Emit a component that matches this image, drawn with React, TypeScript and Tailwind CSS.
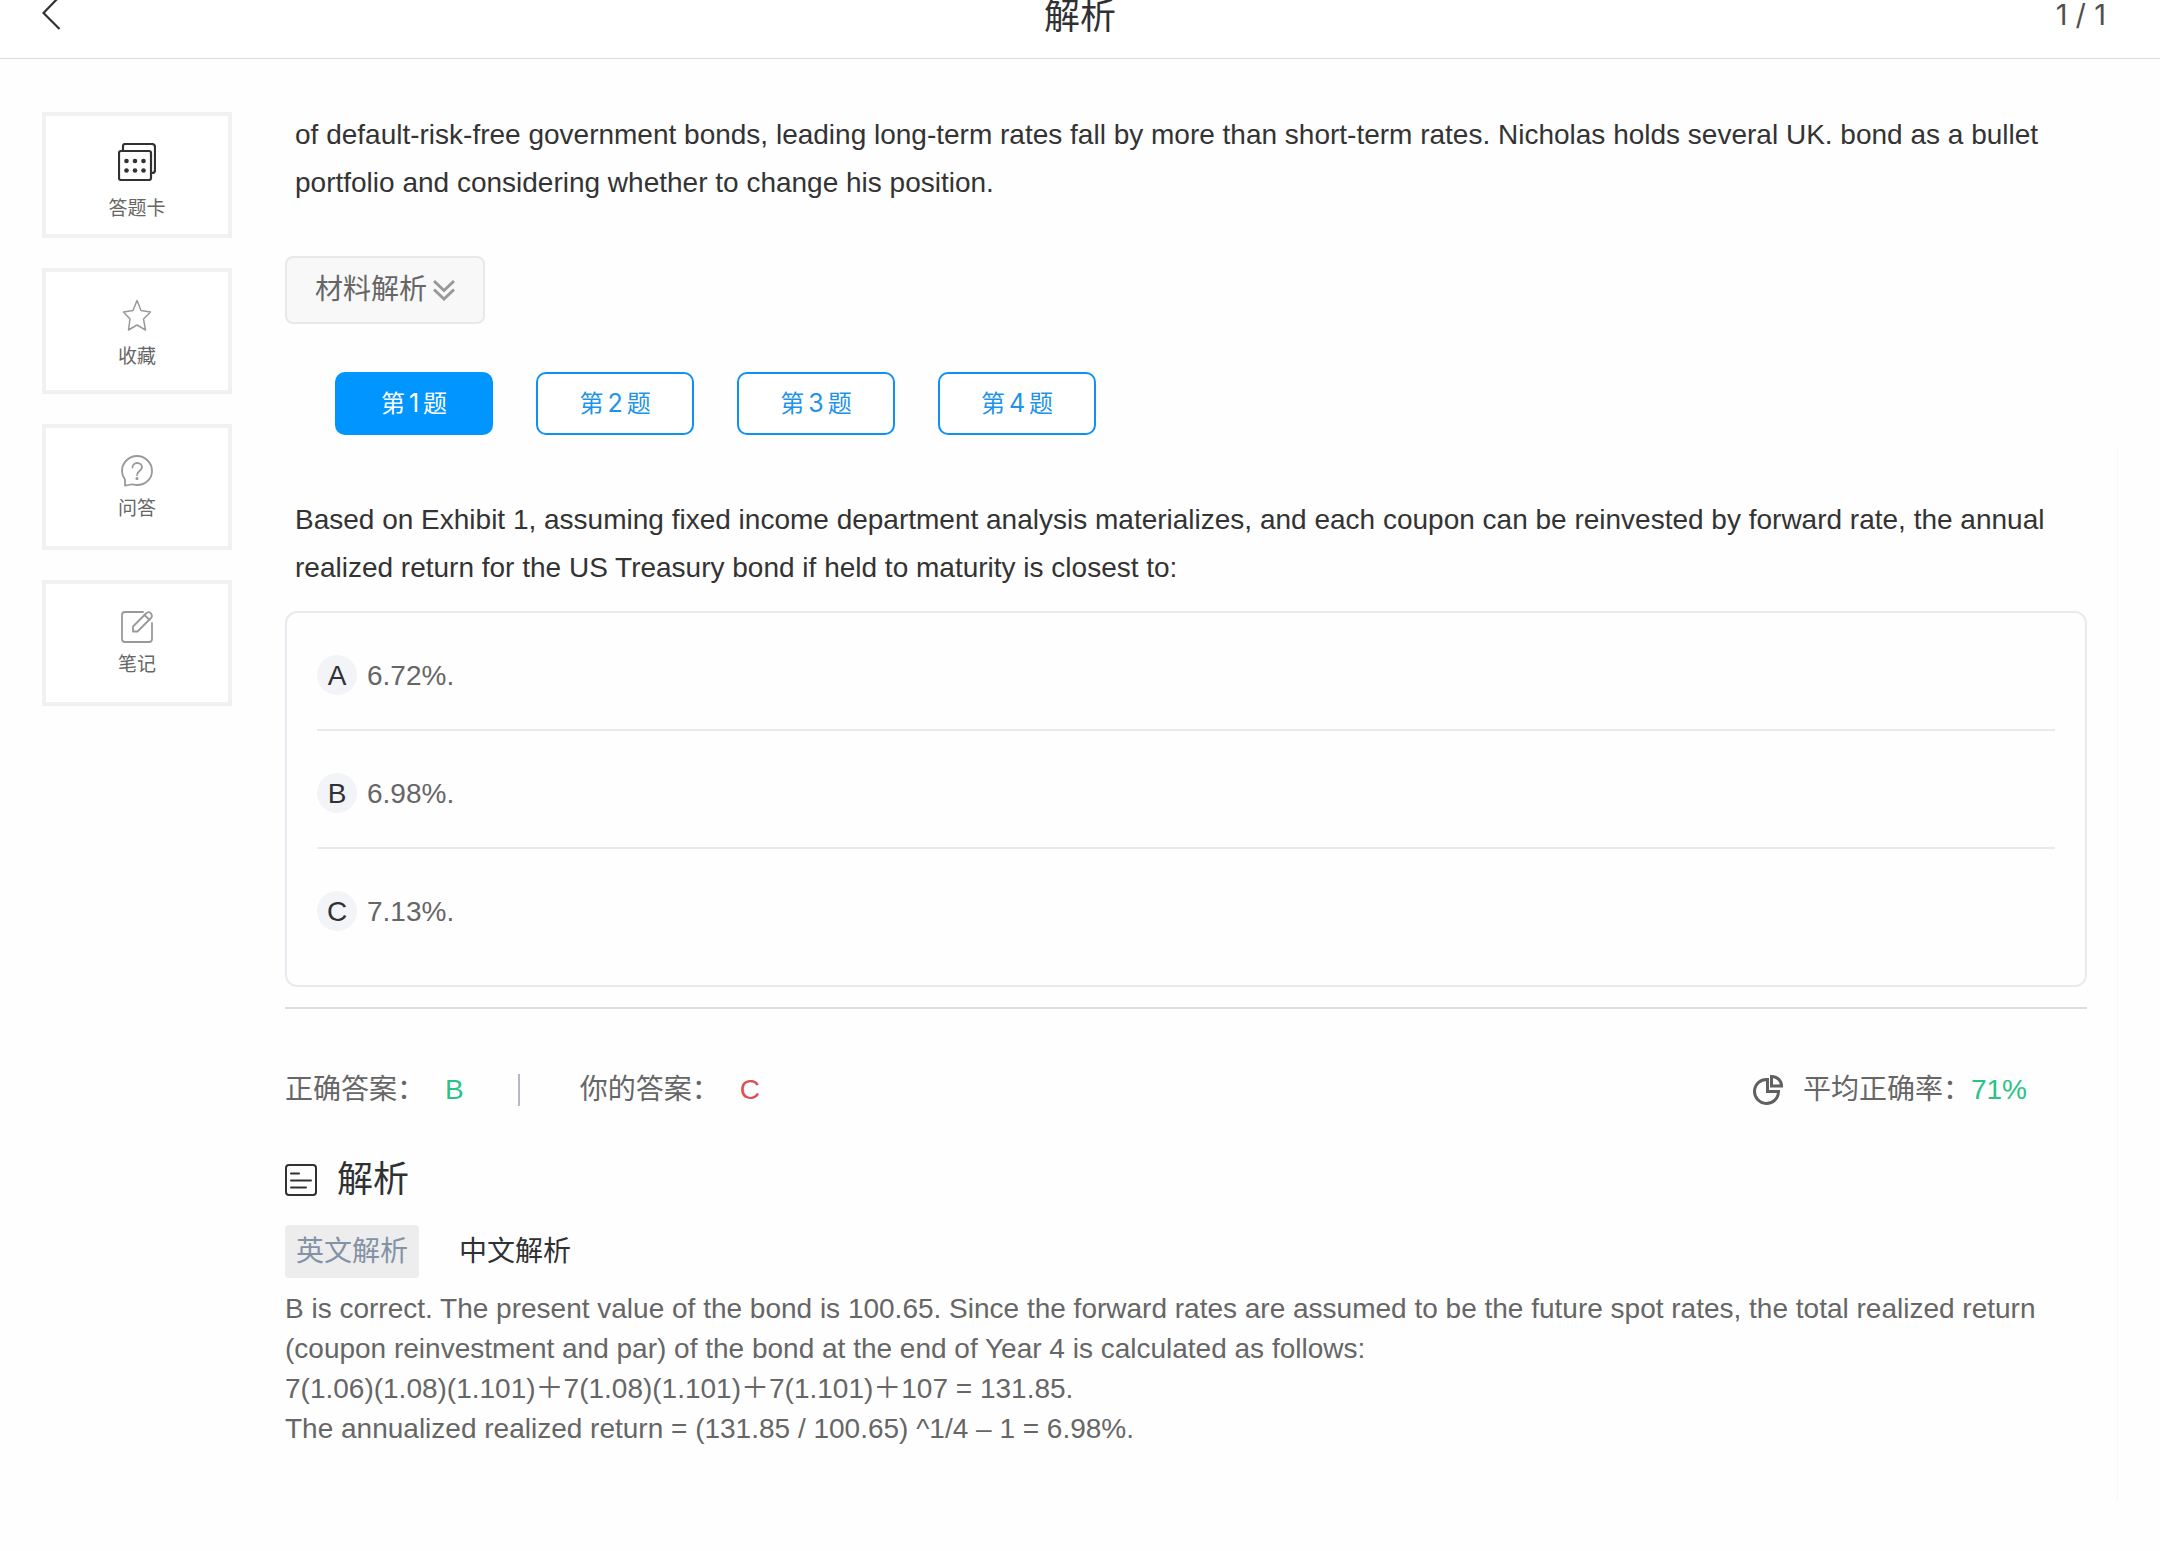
import type { ReactNode } from "react";

const tools: { label: string; icon: ReactNode; labelGap: string }[] = [
  {
    label: "答题卡",
    labelGap: "mt-2",
    icon: (
      <svg viewBox="0 0 38 38" className="h-[38px] w-[38px] text-[#303133]" fill="none" stroke="currentColor" strokeWidth="2.200" strokeLinejoin="round">
        <path d="M5 7V3a2 2 0 0 1 2-2h27a3 3 0 0 1 3 3v23a3 3 0 0 1-3 3" />
        <rect x="1" y="8" width="32" height="29" rx="2" />
        <g fill="currentColor" stroke="none">
          <circle cx="8.500" cy="18" r="2.300" />
          <circle cx="17" cy="18" r="2.300" />
          <circle cx="25.500" cy="18" r="2.300" />
          <circle cx="8.500" cy="27.500" r="2.300" />
          <circle cx="17" cy="27.500" r="2.300" />
          <circle cx="25.500" cy="27.500" r="2.300" />
        </g>
      </svg>
    ),
  },
  {
    label: "收藏",
    labelGap: "mt-1.5",
    icon: (
      <svg viewBox="0 0 32 32" className="h-8 w-8 text-[#999999]" fill="none" stroke="currentColor" strokeWidth="1.500" strokeLinejoin="round">
        <path d="M16 1.500 20 11.500 29.500 13 22.500 20 24.500 31 16 26 7.500 31 9 20 2.500 13 12 11.500Z" />
      </svg>
    ),
  },
  {
    label: "问答",
    labelGap: "mt-0.5",
    icon: (
      <svg viewBox="0 0 32 32" className="h-8 w-8 text-[#999999]" fill="none" stroke="currentColor" strokeWidth="1.800" strokeLinecap="round" strokeLinejoin="round">
        <path d="M4 30.500V24.500C2 22 1 19 1 16 1 8 7.500 1 16 1S31 8 31 16 24.500 30 16 30C13 30 12 29 10 29.500S6 30.500 4 30.500Z" />
        <path d="M11.500 12.500C11.500 10 13.500 8 16.200 8S21 10 21 12.300C21 15.500 16 16 16 20" />
        <circle cx="16" cy="23.500" r="0.700" fill="currentColor" />
      </svg>
    ),
  },
  {
    label: "笔记",
    labelGap: "mt-0.5",
    icon: (
      <svg viewBox="0 0 32 32" className="h-8 w-8 text-[#999999]" fill="none" stroke="currentColor" strokeWidth="1.800" strokeLinecap="round" strokeLinejoin="round">
        <path d="M22 1H4A3 3 0 0 0 1 4V28A3 3 0 0 0 4 31H28A3 3 0 0 0 31 28V12" />
        <path d="M12 20.500V15.500L25 2.500C27 .5 29 1 30 2.500S31.500 5.500 30 7L16.500 20.500Z" />
        <path d="M23.500 4 28.500 9" />
      </svg>
    ),
  },
];

const options = [
  { key: "A", text: "6.72%." },
  { key: "B", text: "6.98%." },
  { key: "C", text: "7.13%." },
];

function Header() {
  return (
    <header className="grid h-[59px] grid-cols-3 items-start border-b border-[#dadada] bg-white px-[42px]">
      <button type="button" aria-label="返回" className="justify-self-start">
        <svg viewBox="0 0 20 32" className="h-8 w-5 text-[#303133]" fill="none" stroke="currentColor" strokeWidth="2.200">
          <path d="M17-3 1.500 13 17.500 29" />
        </svg>
      </button>
      <h1 className="justify-self-center text-[36px] leading-[34px] text-[#303133]">解析</h1>
      <span className="justify-self-end pr-3 font-[Inter] text-[29px] leading-[30px] text-[#505050]">1 / 1</span>
    </header>
  );
}

function Sidebar() {
  return (
    <nav className="flex w-[190px] shrink-0 flex-col gap-[30px] pt-[53px]">
      {tools.map((tool) => (
        <button
          key={tool.label}
          type="button"
          className="flex h-[126px] flex-col items-center border-4 border-[#f1f1f1] bg-white pt-[27px] text-[19px] leading-10 text-[#666666]"
        >
          {tool.icon}
          <span className={tool.labelGap}>{tool.label}</span>
        </button>
      ))}
    </nav>
  );
}

function QuestionTabs() {
  return (
    <div role="tablist" className="ml-[50px] flex gap-[43px]">
      {["1", "2", "3", "4"].map((n) => (
        <button
          key={n}
          type="button"
          role="tab"
          aria-selected={n === "1"}
          className={
            n === "1"
              ? "h-[63px] w-[158px] rounded-[10px] border-2 border-[#0095ff] bg-[#0095ff] text-[24px] text-white"
              : "h-[63px] w-[158px] rounded-[10px] border-2 border-[#0f90f2] bg-white text-[24px] text-[#1e93ea]"
          }
        >
          第<span className="px-1 font-[Inter] text-[25px]">{n}</span>题
        </button>
      ))}
    </div>
  );
}

function Options() {
  return (
    <ol className="rounded-xl border-2 border-[#e9e9f0] px-[30px] pb-5">
      {options.map((option) => (
        <li
          key={option.key}
          className="flex items-center gap-2.5 border-b-2 border-[#e9e9f0] pt-[42px] pb-[34px] text-[28px] leading-[42px] last:border-b-0"
        >
          <span className="h-10 w-10 rounded-full bg-[#f3f4f8] text-center text-[#303133]">{option.key}</span>
          <span className="h-10 text-[#666666]">{option.text}</span>
        </li>
      ))}
    </ol>
  );
}

function AnswerSummary() {
  return (
    <div className="flex items-center pr-[60px] text-[28px] leading-10 text-[#666666]">
      <span>正确答案：</span>
      <span className="ml-5 text-[#2ac385]">B</span>
      <span className="ml-[54px] h-8 w-0.5 bg-[#b4b8c8]" />
      <span className="ml-[60px]">你的答案：</span>
      <span className="ml-5 text-[#dd4f54]">C</span>
      <svg viewBox="0 0 30 30" className="ml-auto h-[30px] w-[30px] text-[#606060]" fill="none" stroke="currentColor" strokeWidth="3">
        <path d="M14.500 4.500A12 12 0 1 0 25.500 16.500H14.500Z" />
        <path d="M18.500 1.500V11H28.500C28.500 5.500 24 1.500 18.500 1.500Z" />
      </svg>
      <span className="ml-5">平均正确率：</span>
      <span className="text-[#2ac385]">71%</span>
    </div>
  );
}

function Analysis() {
  return (
    <div className="text-[28px] leading-10 text-[#666666]">
      <div className="flex items-center gap-5 text-[#303133]">
        <svg viewBox="0 0 32 32" className="h-8 w-8" fill="none" stroke="currentColor" strokeWidth="2" strokeLinecap="round">
          <rect x="1" y="1" width="30" height="30" rx="3" />
          <path d="M6 9.500H14M6 16.500H26M6 23.500H21" />
        </svg>
        <h2 className="text-[36px]">解析</h2>
      </div>
      <div role="tablist" className="mt-[25px] flex gap-[30px]">
        <button type="button" role="tab" aria-selected="true" className="h-[53px] rounded bg-[#ededed] px-[11px] text-[#8492a6]">
          英文解析
        </button>
        <button type="button" role="tab" aria-selected="false" className="h-[53px] px-2.5 text-[#303133]">
          中文解析
        </button>
      </div>
      <div className="mt-[11px]">
        <p>
          B is correct. The present value of the bond is 100.65. Since the forward rates are assumed to be the future spot rates, the total realized return (coupon reinvestment and par) of the bond at the end of Year 4 is calculated as follows:
        </p>
        <p>7(1.06)(1.08)(1.101)＋7(1.08)(1.101)＋7(1.101)＋107 = 131.85.</p>
        <p>The annualized realized return = (131.85 / 100.65) ^1/4 – 1 = 6.98%.</p>
      </div>
    </div>
  );
}

export default function App() {
  return (
    <div lang="zh-CN" className="min-h-screen bg-[#fefefe] font-['Liberation_Sans','Noto_Sans_CJK_SC',sans-serif]">
      <Header />
      <div className="flex gap-[53px] px-[42px]">
        <Sidebar />
        <main className="min-w-0 flex-1">
          <div className="pt-[52px] pr-[31px]">
            <p className="px-2.5 text-[28px] leading-[48px] text-[#333333]">
              of default-risk-free government bonds, leading long-term rates fall by more than short-term rates. Nicholas holds several UK. bond as a bullet portfolio and considering whether to change his position.
            </p>
            <button
              type="button"
              className="mt-[49px] flex h-[68px] w-[200px] items-center gap-1.5 rounded-lg border-2 border-[#e8e8e8] bg-[#f8f8f8] pl-7 text-[28px] text-[#666666]"
            >
              材料解析
              <svg viewBox="0 0 22 22" className="h-[22px] w-[22px] text-[#999999]" fill="none" stroke="currentColor" strokeWidth="3">
                <path d="M1 2 11 11.500 21 2M1 10.500 11 20 21 10.500" />
              </svg>
            </button>
            <div className="pt-12">
              <QuestionTabs />
            </div>
          </div>
          <section className="mt-[15px] border-r border-[#f7f7f7] pt-[46px] pr-[30px] pb-[52px]">
            <p className="px-2.5 text-[28px] leading-[48px] text-[#333333]">
              Based on Exhibit 1, assuming fixed income department analysis materializes, and each coupon can be reinvested by forward rate, the annual realized return for the US Treasury bond if held to maturity is closest to:
            </p>
            <div className="mt-[19px]">
              <Options />
            </div>
            <hr className="mt-5 mb-[61px] border-t-2 border-[#dcdce6]" />
            <AnswerSummary />
            <div className="mt-[50px]">
              <Analysis />
            </div>
          </section>
        </main>
      </div>
    </div>
  );
}
